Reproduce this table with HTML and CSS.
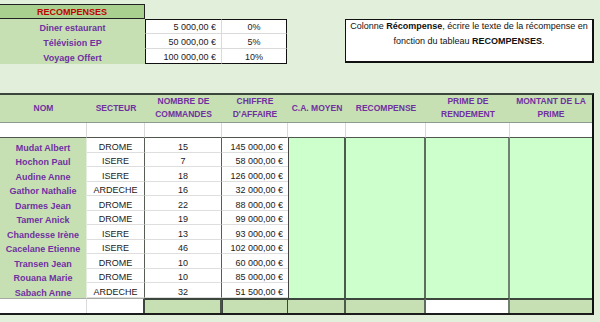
FILE: index.html
```html
<!DOCTYPE html>
<html lang="fr">
<head>
<meta charset="utf-8">
<title>Récompenses</title>
<link rel="stylesheet" href="styles.css">
</head>
<body>
<div class="sheet">
  <div class="top">
    <div class="rec">
      <div class="rec-title">RECOMPENSES</div><div class="rec-empty"></div><div class="rec-empty"></div>
      <div class="rec-label">Diner estaurant</div><div class="rec-val first">5 000,00 €</div><div class="rec-pct first">0%</div>
      <div class="rec-label">Télévision EP</div><div class="rec-val">50 000,00 €</div><div class="rec-pct">5%</div>
      <div class="rec-label">Voyage Offert</div><div class="rec-val last">100 000,00 €</div><div class="rec-pct last">10%</div>
    </div>
    <div class="note"><p>Colonne <b>Récompense</b>, écrire le texte de la récompense en<br>fonction du tableau <b>RECOMPENSES</b>.</p></div>
  </div>

  <div class="grid">
    <div class="h">NOM</div>
    <div class="h">SECTEUR</div>
    <div class="h">NOMBRE DE<br>COMMANDES</div>
    <div class="h">CHIFFRE<br>D'AFFAIRE</div>
    <div class="h">C.A. MOYEN</div>
    <div class="h">RECOMPENSE</div>
    <div class="h">PRIME DE<br>RENDEMENT</div>
    <div class="h">MONTANT DE LA<br>PRIME</div>

    <div class="b"></div><div class="b"></div><div class="b"></div><div class="b"></div>
    <div class="b"></div><div class="b"></div><div class="b"></div><div class="b"></div>

    <div class="fill c5"></div>
    <div class="fill c6"></div>
    <div class="fill c7"></div>
    <div class="fill c8"></div>

    <div class="n">Mudat Albert</div><div class="s">DROME</div><div class="q">15</div><div class="m">145 000,00 €</div>
    <div class="n">Hochon Paul</div><div class="s">ISERE</div><div class="q">7</div><div class="m">58 000,00 €</div>
    <div class="n">Audine Anne</div><div class="s">ISERE</div><div class="q">18</div><div class="m">126 000,00 €</div>
    <div class="n">Gathor Nathalie</div><div class="s">ARDECHE</div><div class="q">16</div><div class="m">32 000,00 €</div>
    <div class="n">Darmes Jean</div><div class="s">DROME</div><div class="q">22</div><div class="m">88 000,00 €</div>
    <div class="n">Tamer Anick</div><div class="s">DROME</div><div class="q">19</div><div class="m">99 000,00 €</div>
    <div class="n">Chandesse Irène</div><div class="s">ISERE</div><div class="q">13</div><div class="m">93 000,00 €</div>
    <div class="n">Cacelane Etienne</div><div class="s">ISERE</div><div class="q">46</div><div class="m">102 000,00 €</div>
    <div class="n">Transen Jean</div><div class="s">DROME</div><div class="q">10</div><div class="m">60 000,00 €</div>
    <div class="n">Rouana Marie</div><div class="s">DROME</div><div class="q">10</div><div class="m">85 000,00 €</div>
    <div class="n">Sabach Anne</div><div class="s">ARDECHE</div><div class="q">32</div><div class="m">51 500,00 €</div>

    <div class="t t1"></div>
    <div class="t t2"></div>
    <div class="t t3 g"></div>
    <div class="t t4 g"></div>
    <div class="t t5 g"></div>
    <div class="t t6 g"></div>
    <div class="t t7"></div>
    <div class="t t8 g"></div>
  </div>
</div>
</body>
</html>
```

FILE: styles.css
```css
html, body {
  margin: 0;
  padding: 0;
  background: #e2efda;
}
body {
  font-family: "Liberation Sans", Arial, sans-serif;
  font-size: 9px;
  color: #1a1a1a;
}
.sheet {
  width: 600px;
  height: 322px;
  overflow: hidden;
}

/* ---------- top part ---------- */
.top {
  height: 93px;
  box-sizing: border-box;
  padding-top: 4px;
  display: flex;
  align-items: flex-start;
}
.rec {
  display: grid;
  grid-template-columns: 145px 77px 65px;
  grid-template-rows: 15px 15px 14.5px 15px;
}
.rec-title {
  background: #a9d08e;
  border: 1px solid #222;
  border-left: none;
  box-sizing: border-box;
  color: #c00000;
  font-weight: bold;
  text-align: center;
  line-height: 13px;
  padding-top: 1px;
}
.rec-label {
  background: #c6e0b4;
  color: #7030a0;
  font-weight: bold;
  text-align: center;
  display: flex;
  align-items: flex-end;
  justify-content: center;
  line-height: 10px;
  padding-bottom: 1px;
}
.rec-val, .rec-pct {
  background: #fff;
  border-bottom: 1px solid #dadada;
  display: flex;
  align-items: flex-end;
  line-height: 10px;
  padding-bottom: 1px;
  box-sizing: border-box;
}
.rec-val {
  border-left: 1px solid #111;
  border-right: 1px solid #dadada;
  justify-content: flex-end;
  padding-right: 5px;
}
.rec-pct {
  border-right: 1px solid #111;
  justify-content: center;
}
.rec-val.first, .rec-pct.first { border-top: 1px solid #111; }
.rec-val.last, .rec-pct.last { border-bottom: 1px solid #111; }

.note {
  margin-left: 58px;
  margin-top: 15px;
  width: 249px;
  height: 44px;
  box-sizing: border-box;
  background: #fff;
  border: 1px solid #111;
  border-width: 1px 2px 2px 1px;
  text-align: center;
  color: #111;
}
.note p {
  margin: 0;
  padding-top: 0;
  line-height: 15px;
  margin-top: -1px;
}

/* ---------- main table ---------- */
.grid {
  display: grid;
  width: 594px;
  box-sizing: border-box;
  grid-template-columns: 87px 58px 77px 66px 58px 80px 84px 82px;
  grid-template-rows: 28px 15px repeat(11, 14.5px) 15.5px;
  border-top: 2px solid #3c463c;
  border-right: 2px solid #111;
  border-bottom: 2px solid #1c1c1c;
}
.h {
  background: #c6e0b4;
  color: #7030a0;
  font-weight: bold;
  font-size: 8.5px;
  line-height: 13px;
  text-align: center;
  display: flex;
  align-items: center;
  justify-content: center;
  border-bottom: 1px solid #8d9a8d;
  padding-bottom: 1px;
  box-sizing: border-box;
}
.b {
  background: #fff;
  border-right: 1px solid #d9d9d9;
  border-bottom: 1px solid #4e564e;
}
.b:nth-child(16) { border-right: none; }

.fill {
  grid-row: 3 / span 11;
  background: #ccffcc;
}
.c5 { grid-column: 5; border-right: 2px solid #4b5b4b; border-left: 1px solid #444; }
.c6 { grid-column: 6; border-right: 2px solid #5e6e5e; }
.c7 { grid-column: 7; border-right: 2px solid #718171; }
.c8 { grid-column: 8; }

.n, .s, .q, .m {
  display: flex;
  align-items: flex-end;
  line-height: 10px;
  padding-bottom: 0;
  box-sizing: border-box;
  white-space: nowrap;
}
.n {
  background: #c6e0b4;
  color: #7030a0;
  font-weight: bold;
  justify-content: center;
  border-right: 1px solid #e4ece0;
}
.s, .q, .m {
  background: #fff;
  border-bottom: 1px solid #dedede;
}
.s { justify-content: center; border-right: 1px solid #555d55; }
.q { justify-content: center; border-right: 1px solid #555d55; }
.m { justify-content: flex-end; padding-right: 5px; }

.t {
  background: #fff;
  box-sizing: border-box;
  border-top: 2px solid #3c463c;
  border-right: 1px solid #4a524a;
}
.t.g { background: #c6e0b4; }
.t1 { border-top: 1px solid #a5aaa5; border-right: 1px solid #dcdcdc; }
.t2 { border-top: 1px solid #a5aaa5; border-right: 2px solid #3c463c; }
.t3 { border-right: 2px solid #4a524a; }
.t4 { border-right: 1px solid #3c463c; border-left: 1px solid #3c463c; }
.t5 { border-right: 2px solid #4b5b4b; }
.t6 { border-right: 2px solid #5e6e5e; }
.t7 { border-right: 2px solid #718171; }
.t8 { border-right: none; }
```
